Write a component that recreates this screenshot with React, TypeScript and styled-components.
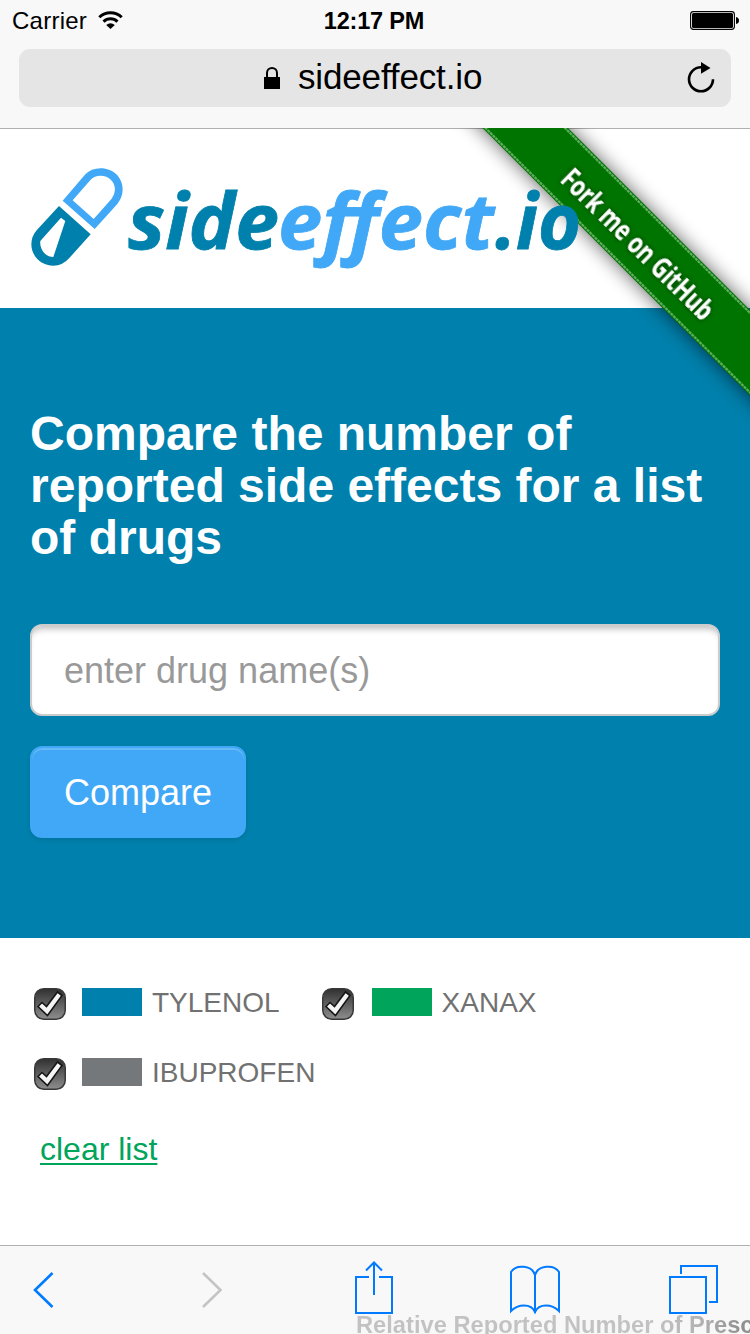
import React from "react";
import styled, { createGlobalStyle } from "styled-components";

const sans = `"Liberation Sans", Arial, sans-serif`;
const teal = "#0080ac";
const sky = "#40a8f6";
const iosBlue = "#007aff";

const GlobalStyle = createGlobalStyle`
  * { box-sizing: border-box; }
  body { margin: 0; background: #fff; font-family: ${sans}; }
`;

const Screen = styled.div`
  width: 750px;
  height: 1334px;
  overflow: hidden;
  display: flex;
  flex-direction: column;
  background: #fff;
`;

const BrowserBar = styled.header`
  flex: none;
  height: 129px;
  background: #f8f8f8;
  border-bottom: 1px solid #b0b0b0;
`;

const StatusRow = styled.div`
  height: 49px;
  padding: 7px 12px 0 12px;
  display: grid;
  grid-template-columns: 1fr auto 1fr;
  font-size: 24px;
  line-height: 28px;
  color: #000;
`;

const Carrier = styled.div`
  display: flex;
  gap: 11px;
  letter-spacing: 0.25px;
  svg { margin-top: 3px; }
`;

const Clock = styled.div`
  font-weight: bold;
  font-size: 23.5px;
  letter-spacing: -0.2px;
  transform: translateX(-1px);
`;

const Battery = styled.div`
  justify-self: end;
  margin-right: -2px;
  padding-top: 4px;
  line-height: 0;
`;

const AddressBar = styled.div`
  height: 58px;
  margin: 0 19px;
  padding: 0 16px 0 244px;
  border-radius: 11px;
  background: #e5e5e5;
  display: flex;
  align-items: center;
`;

const Host = styled.span`
  margin: -2px 0 0 18px;
  flex: 1;
  font-size: 35px;
  line-height: 40px;
  letter-spacing: -0.15px;
  color: #000;
`;

const Viewport = styled.main`
  position: relative;
  flex: none;
  height: 1116px;
`;

const Ribbon = styled.svg`
  position: absolute;
  right: 0;
  top: -1px;
`;

const Masthead = styled.div`
  height: 179px;
  padding: 26px 20px;
`;

const Logo = styled.svg`
  position: relative;
  display: block;
`;

const Hero = styled.section`
  height: 630px;
  padding: 100px 30px 0;
  background: ${teal};
`;

const Title = styled.h1`
  margin: 0 0 60px;
  font-size: 48px;
  line-height: 52px;
  letter-spacing: 0;
  color: #fff;
  white-space: nowrap;
`;

const DrugInput = styled.input`
  display: block;
  width: 690px;
  height: 92px;
  margin-bottom: 30px;
  padding: 2px 32px 0;
  border: 2px solid #ccc;
  border-radius: 12px;
  background: #fff;
  box-shadow: inset 0 7px 6px -4px rgba(0, 0, 0, 0.25);
  font: 36px ${sans};
  outline: 0;
  &::placeholder { color: #999; opacity: 1; }
`;

const CompareButton = styled.button`
  width: 216px;
  height: 92px;
  padding: 1px 0 0;
  border: 2px solid ${sky};
  border-radius: 12px;
  background: ${sky};
  box-shadow: inset 0 2px 0 rgba(255, 255, 255, 0.2), 0 2px 4px rgba(0, 0, 0, 0.1);
  font: 36px ${sans};
  color: #fff;
`;

const Legend = styled.section`
  padding: 49px 34px 0;
`;

const LegendRow = styled.div`
  display: flex;
  gap: 42px;
  height: 70px;
`;

const LegendItem = styled.label`
  display: flex;
  align-items: flex-start;
  font-size: 28px;
  line-height: 32px;
  color: #717171;
`;

const Swatch = styled.span<{ $color: string; $gap?: number }>`
  width: 60px;
  height: 28px;
  margin: 1px 10px 0 ${(p) => p.$gap ?? 16}px;
  background: ${(p) => p.$color};
`;

const CheckSvg = styled.svg`
  margin-top: 1px;
`;

const ClearLink = styled.a`
  display: inline-block;
  margin: 4px 0 0 6px;
  font-size: 32px;
  line-height: 36px;
  color: #00a45a;
  text-decoration: underline;
  text-decoration-thickness: 2px;
  text-underline-offset: 3px;
`;

const Toolbar = styled.nav`
  position: relative;
  flex: none;
  height: 89px;
  border-top: 1px solid #b0b0b0;
  background: #f8f8f8;
  padding: 15px 0 0 32px;
  display: grid;
  grid-template-columns: 169px 153px 155px 159px 51px;
`;

const ChartTitle = styled.div`
  position: absolute;
  left: 356px;
  top: 66px;
  font-weight: bold;
  font-size: 23.7px;
  line-height: 27px;
  white-space: nowrap;
  color: transparent;
  background: linear-gradient(90deg, #c2c2c2 0, #c2c2c2 300px, #b2b2b2 345px, #909090 385px);
  background-clip: text;
`;

function Check() {
  return (
    <CheckSvg width="32" height="32" viewBox="0 0 32 32">
      <defs>
        <linearGradient id="box" x1="0" y1="0" x2="0" y2="1">
          <stop offset="0" stopColor="#303030" />
          <stop offset="1" stopColor="#8e8e8e" />
        </linearGradient>
      </defs>
      <rect x="0.75" y="0.75" width="30.5" height="30.5" rx="9" fill="url(#box)" stroke="#383838" strokeWidth="1.5" />
      <path d="M4 18.5L8 14.5L12.5 18.5L23.5 4L28 7.5L13.5 27.5Z" fill="#f5f5f5" stroke="#151515" strokeWidth="1.6" />
    </CheckSvg>
  );
}

const wordmark = [
  { text: "side", x: 128, width: 151, color: teal },
  { text: "effect", x: 278, width: 216, color: sky },
  { text: ".io", x: 495, width: 86, color: teal },
];

export default function App() {
  return (
    <>
      <GlobalStyle />
      <Screen>
        <BrowserBar>
          <StatusRow>
            <Carrier>
              Carrier
              <svg width="25" height="20" viewBox="0 0 25 20" fill="none" stroke="#000" strokeWidth="3">
                <path d="M1.3 7.3C7.5 1.1 17.5 1.1 23.7 7.3" />
                <path d="M5.5 11.6C9.5 7.9 15.5 7.9 19.5 11.6" />
                <path d="M8.2 15Q12.5 11.3 16.8 15L12.5 19Z" fill="#000" stroke="none" />
              </svg>
            </Carrier>
            <Clock>12:17 PM</Clock>
            <Battery>
              <svg width="50" height="20" viewBox="0 0 50 20">
                <rect x="0.6" y="0.6" width="43.8" height="17.8" rx="2.8" fill="none" stroke="#000" strokeWidth="1.1" />
                <rect x="2" y="2" width="41" height="15" rx="1.5" />
                <path d="M46 6Q49 6.5 49 9.500T46 13Z" />
              </svg>
            </Battery>
          </StatusRow>
          <AddressBar>
            <svg width="17" height="24" viewBox="0 0 17 24">
              <path d="M4 12V7C4 0.2 14 0.2 14 7V12" fill="none" stroke="#000" strokeWidth="2" />
              <rect x="1" y="11" width="16" height="12" />
            </svg>
            <Host>sideeffect.io</Host>
            <svg width="28" height="32" viewBox="0 0 28 32">
              <path d="M14 5.300A12 12 0 1 0 26 17.300" fill="none" stroke="#000" strokeWidth="2.6" />
              <path d="M14 0L23.500 6L14 11.800Z" />
            </svg>
          </AddressBar>
        </BrowserBar>

        <Viewport>
          <Ribbon width="298" height="298" viewBox="452 128 298 298">
            <defs>
              <filter id="shade" x="-20%" y="-20%" width="140%" height="140%">
                <feGaussianBlur stdDeviation="10" />
              </filter>
              <filter id="textShade" x="-10%" y="-30%" width="120%" height="160%">
                <feDropShadow dx="0" dy="0" stdDeviation="2.5" floodColor="#000" floodOpacity="0.6" />
              </filter>
            </defs>
            <path d="M383 28H467L850 411V495Z" fill="#000" opacity="0.65" filter="url(#shade)" />
            <path d="M382.500 28H468L850 410V495.500Z" fill="#007400" />
            <g fill="none" stroke="#5fae5f" strokeWidth="2.2" strokeDasharray="3 0.7">
              <path d="M385.500 28L850 492.500" />
              <path d="M465 28L850 413" />
            </g>
            <text
              transform="translate(559 181) rotate(44.6)"
              fontFamily="'Open Sans', sans-serif"
              fontWeight="700"
              fontSize="28"
              textLength="201"
              lengthAdjust="spacingAndGlyphs"
              fill="#fff"
              filter="url(#textShade)"
            >
              Fork me on GitHub
            </text>
          </Ribbon>
          <Masthead>
            <Logo width="580" height="125" viewBox="20 155 580 125">
              <g transform="translate(20 155) scale(0.33333)" fillRule="evenodd">
                <path
                  fill={sky}
                  d="M128 137L196 58Q213 40 242 40C280 40 308 68 308 103Q308 127 292 147L224 222ZM158 136L221 192L275 131Q285 118 285 103C285 80 266 62 242 62Q223 62 212 74Z"
                />
                <path
                  fill={teal}
                  d="M117 153L212 238L148 309Q128 332 100 332C63 332 34 303 34 268Q34 244 50 226ZM123 188L61 258C58 280 74 306 100 306L136 198Z"
                />
              </g>
              <g fontFamily="'Open Sans', sans-serif" fontWeight="700" fontStyle="italic" fontSize="77">
                {wordmark.map((part) => (
                  <text
                    key={part.text}
                    x={part.x}
                    y="249"
                    textLength={part.width}
                    lengthAdjust="spacingAndGlyphs"
                    fill={part.color}
                    stroke={part.color}
                    strokeWidth="0.8"
                  >
                    {part.text}
                  </text>
                ))}
              </g>
            </Logo>
          </Masthead>

          <Hero>
            <Title>
              Compare the number of
              <br />
              reported side effects for a list
              <br />
              of drugs
            </Title>
            <DrugInput placeholder="enter drug name(s)" />
            <CompareButton>Compare</CompareButton>
          </Hero>

          <Legend>
            <LegendRow>
              <LegendItem>
                <Check />
                <Swatch $color={teal} />
                TYLENOL
              </LegendItem>
              <LegendItem>
                <Check />
                <Swatch $color="#00a45a" $gap={18} />
                XANAX
              </LegendItem>
            </LegendRow>
            <LegendRow>
              <LegendItem>
                <Check />
                <Swatch $color="#75787b" />
                IBUPROFEN
              </LegendItem>
            </LegendRow>
            <ClearLink>clear list</ClearLink>
          </Legend>
        </Viewport>

        <Toolbar>
          <ChartTitle>Relative Reported Number of Prescriptions</ChartTitle>
          <svg width="22" height="58" viewBox="32 1261 22 58" fill="none" stroke={iosBlue} strokeWidth="2.6">
            <path d="M52.5 1273L35 1290L52.5 1307" />
          </svg>
          <svg width="22" height="58" viewBox="201 1261 22 58" fill="none" stroke="#c4c4c4" strokeWidth="2.6">
            <path d="M203 1273L220.5 1290L203 1307" />
          </svg>
          <svg width="40" height="58" viewBox="354 1261 40 58" fill="none" stroke={iosBlue} strokeWidth="2">
            <path d="M369 1277H356V1313H392V1277H379M374 1295V1263M366 1270.5L374 1262.5L382 1270.5" />
          </svg>
          <svg width="52" height="58" viewBox="509 1261 52 58" fill="none" stroke={iosBlue} strokeWidth="2">
            <path d="M535 1313V1275C532 1265 516 1264 511 1272V1311C518 1304 531 1303 535 1312C539 1303 552 1304 559 1311V1272C554 1264 538 1265 535 1275" />
          </svg>
          <svg width="51" height="58" viewBox="668 1261 51 58" fill="none" stroke={iosBlue} strokeWidth="2">
            <path d="M670 1277H706V1313H670ZM681 1274V1266H717V1302H709" />
          </svg>
        </Toolbar>
      </Screen>
    </>
  );
}
